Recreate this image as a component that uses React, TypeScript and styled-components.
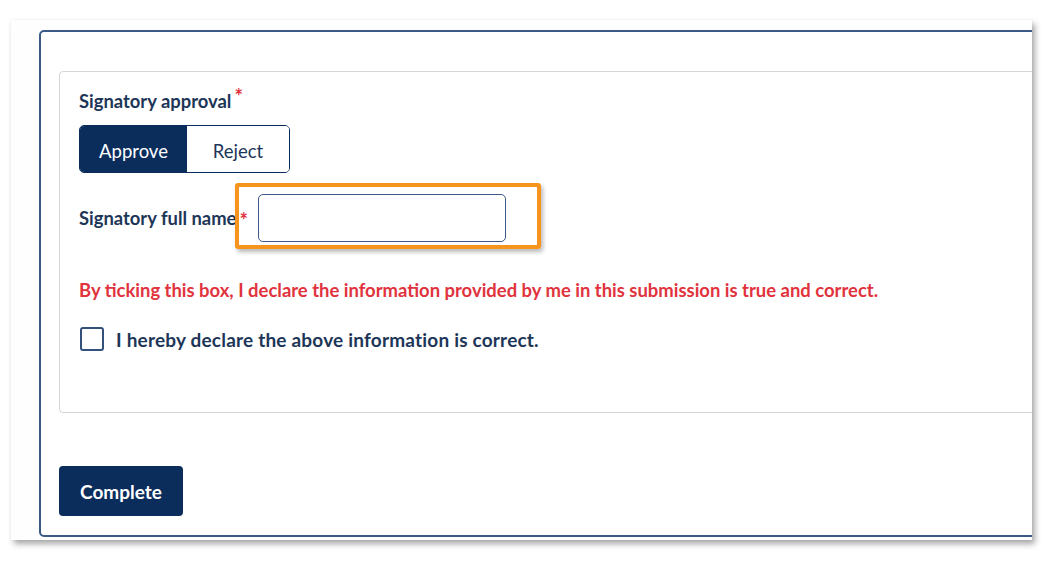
import React, { useState } from 'react';
import styled, { createGlobalStyle } from 'styled-components';

const navy = '#0b2d5c';
const ink = '#1d3658';
const red = '#e1333d';

const GlobalStyle = createGlobalStyle`
  html, body {
    margin: 0;
    padding: 0;
    background: #ffffff;
    font-family: Lato, "Open Sans", Arial, sans-serif;
  }
`;

const Stage = styled.div`
  padding: 20px 0 0 11px;
  width: 1059px;
  height: 565px;
  box-sizing: border-box;
  overflow: hidden;
`;

const Sheet = styled.div`
  width: 1021px;
  height: 520px;
  box-sizing: border-box;
  background: #fefefe;
  padding: 10px 0 0 28px;
  overflow: hidden;
  box-shadow: 3px 4px 6px rgba(0, 0, 0, 0.34), 0 0 2px rgba(0, 0, 0, 0.06);
`;

const Card = styled.div`
  width: 1040px;
  height: 507px;
  box-sizing: border-box;
  border: 2px solid #3c5a88;
  border-radius: 5px;
  padding: 39px 0 0 18px;
  background: #fff;
`;

const Panel = styled.div`
  border: 1px solid #d6d6d6;
  border-radius: 4px;
  height: 342px;
  box-sizing: border-box;
  padding: 17px 0 0 19px;
  display: flex;
  flex-direction: column;
`;

const Label = styled.span`
  font-size: 18.4px;
  font-weight: 700;
  color: ${ink};
  line-height: 24px;
`;

const Required = styled.sup`
  color: ${red};
  font-size: 20px;
  font-weight: 700;
  line-height: 0;
  margin-left: 3px;
  position: relative;
  top: 2px;
`;

const Segmented = styled.div`
  display: flex;
  margin-top: 12px;
  width: 211px;
  height: 48px;
  border: 1.5px solid ${navy};
  border-radius: 5px;
  overflow: hidden;
  box-sizing: border-box;
`;

const Segment = styled.button<{ $active: boolean }>`
  flex: ${(p) => (p.$active ? '0 0 107px' : '1 1 auto')};
  border: none;
  margin: 0;
  padding: 3px 0 0;
  font-family: inherit;
  font-size: 18.5px;
  background: ${(p) => (p.$active ? navy : '#fff')};
  color: ${(p) => (p.$active ? '#fff' : ink)};
  cursor: pointer;
`;

const NameRow = styled.div`
  display: flex;
  align-items: center;
  margin-top: 21px;
`;

const FieldWrap = styled.div`
  position: relative;
  margin-left: 10px;
`;

const Input = styled.input`
  display: block;
  width: 248px;
  height: 48px;
  box-sizing: border-box;
  border: 1.5px solid #3c5a88;
  border-radius: 5px;
  font-family: inherit;
  font-size: 18px;
  padding: 0 10px;
  outline: none;
  background: #fff;
`;

const Highlight = styled.div`
  position: absolute;
  left: -23px;
  right: -35px;
  top: -11px;
  bottom: -7px;
  border: 4px solid #f7941d;
  border-radius: 3px;
  pointer-events: none;
  box-shadow: 2px 3px 4px rgba(0, 0, 0, 0.28);
`;

const Warning = styled.p`
  margin: 36px 0 0;
  font-size: 18.45px;
  font-weight: 700;
  line-height: 24px;
  color: ${red};
`;

const CheckRow = styled.label`
  display: flex;
  align-items: center;
  gap: 12px;
  margin-top: 25px;
  padding-left: 1px;
  cursor: pointer;
`;

const Box = styled.span<{ $checked: boolean }>`
  width: 24px;
  height: 24px;
  box-sizing: border-box;
  border: 2px solid #34507c;
  border-radius: 3px;
  background: ${(p) => (p.$checked ? navy : '#fff')};
  display: flex;
  align-items: center;
  justify-content: center;
`;

const CheckText = styled.span`
  font-size: 19px;
  font-weight: 700;
  color: ${ink};
  letter-spacing: 0.2px;
`;

const Complete = styled.button`
  margin-top: 53px;
  width: 124px;
  height: 50px;
  border: none;
  border-radius: 4px;
  background: ${navy};
  color: #fff;
  font-family: inherit;
  font-size: 19px;
  font-weight: 700;
  cursor: pointer;
`;

export default function App() {
  const [approval, setApproval] = useState<'approve' | 'reject'>('approve');
  const [checked, setChecked] = useState(false);
  const [name, setName] = useState('');

  return (
    <>
      <GlobalStyle />
      <Stage>
        <Sheet>
          <Card>
            <Panel>
              <div>
                <Label>Signatory approval</Label>
                <Required>*</Required>
              </div>
              <Segmented>
                <Segment $active={approval === 'approve'} onClick={() => setApproval('approve')}>
                  Approve
                </Segment>
                <Segment $active={approval === 'reject'} onClick={() => setApproval('reject')}>
                  Reject
                </Segment>
              </Segmented>
              <NameRow>
                <Label>Signatory full name</Label>
                <Required>*</Required>
                <FieldWrap>
                  <Input value={name} onChange={(e) => setName(e.target.value)} />
                  <Highlight />
                </FieldWrap>
              </NameRow>
              <Warning>
                By ticking this box, I declare the information provided by me in this submission is true and correct.
              </Warning>
              <CheckRow onClick={() => setChecked(!checked)}>
                <Box $checked={checked}>
                  {checked && (
                    <svg width="14" height="14" viewBox="0 0 24 24" fill="none" stroke="#fff" strokeWidth="3">
                      <path d="M4 12l5 5L20 6" />
                    </svg>
                  )}
                </Box>
                <CheckText>I hereby declare the above information is correct.</CheckText>
              </CheckRow>
            </Panel>
            <Complete>Complete</Complete>
          </Card>
        </Sheet>
      </Stage>
    </>
  );
}
